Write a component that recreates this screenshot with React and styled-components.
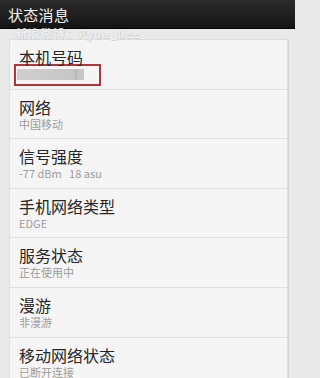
import React from 'react';
import styled, { createGlobalStyle } from 'styled-components';

const GlobalStyle = createGlobalStyle`
  html, body {
    margin: 0;
    padding: 0;
    background: #e9e9e9;
  }
  body {
    font-family: 'Noto Sans CJK SC', 'Noto Sans', sans-serif;
  }
`;

const items = [
  { title: '网络', sub: '中国移动' },
  { title: '信号强度', sub: '-77 dBm   18 asu' },
  { title: '手机网络类型', sub: 'EDGE' },
  { title: '服务状态', sub: '正在使用中' },
  { title: '漫游', sub: '非漫游' },
  { title: '移动网络状态', sub: '已断开连接' },
];

export default function App() {
  return (
    <>
      <GlobalStyle />
      <Screen>
        <TitleBar>状态消息</TitleBar>
        <Content>
          <Watermark>新浪微博：Pyua_Lee</Watermark>
          <Card>
            <Row>
              <RowTitle>本机号码</RowTitle>
              <Highlight>
                <Masked />
              </Highlight>
            </Row>
            {items.map((it) => (
              <Row key={it.title}>
                <RowTitle>{it.title}</RowTitle>
                <RowSub>{it.sub}</RowSub>
              </Row>
            ))}
          </Card>
        </Content>
      </Screen>
    </>
  );
}

const Screen = styled.div`
  width: 295px;
  height: 378px;
  overflow: hidden;
  background: #e9e9e9;
`;

const TitleBar = styled.header`
  height: 28px;
  padding: 0 8px;
  display: flex;
  align-items: center;
  background: linear-gradient(#2c2c2c, #141414);
  color: #f2f2f2;
  font-size: 15px;
  letter-spacing: 0.3px;
  border-bottom: 1px solid #050505;
`;

const Content = styled.div`
  position: relative;
  padding: 10px 7px 0 9px;
`;

const Watermark = styled.div`
  position: absolute;
  left: 16px;
  top: -2px;
  font-size: 11px;
  line-height: 12px;
  color: #f4f4f4;
  text-shadow: 1px 1px 0 #cfcfcf, -1px 0 0 #dadada;
  letter-spacing: 1.5px;
  white-space: nowrap;
`;

const Card = styled.div`
  background: #f5f5f5;
  border: 1px solid #dedede;
  border-radius: 2px;
  box-shadow: 1px 0 0 #d4d4d4;
`;

const Row = styled.div`
  box-sizing: border-box;
  height: 49.6px;
  padding: 7px 9px 0;
  border-bottom: 1px solid #e0e0e0;
`;

const RowTitle = styled.div`
  font-size: 16px;
  line-height: 21px;
  color: #262626;
  white-space: nowrap;
`;

const RowSub = styled.div`
  font-size: 11px;
  line-height: 13px;
  color: #9c9c9c;
  white-space: pre;
`;

const Highlight = styled.div`
  box-sizing: border-box;
  margin: -4px 0 0 -5px;
  width: 87px;
  height: 22px;
  border: 2px solid #b0363c;
  padding: 3px 0 0 1px;
`;

const Masked = styled.div`
  width: 67px;
  height: 11px;
  background: linear-gradient(90deg, #cfcfcf, #c6c6c6 85%, #b8b8b8 88%, #c6c6c6 92%);
`;
